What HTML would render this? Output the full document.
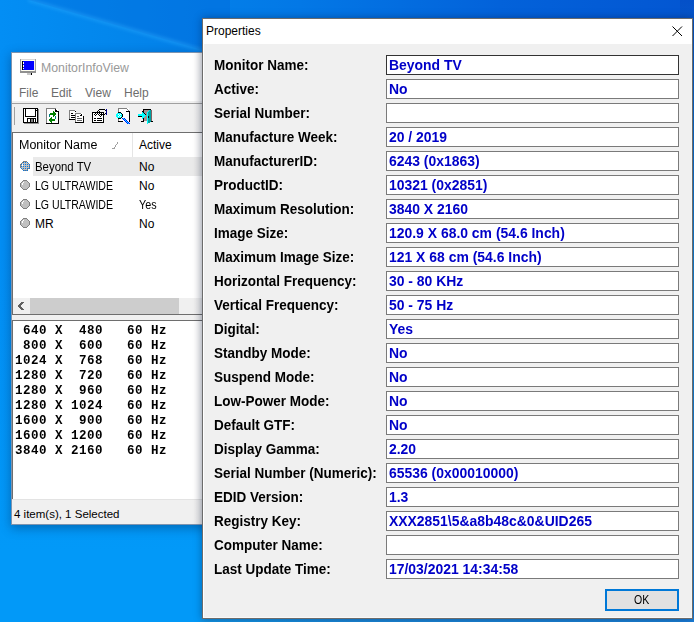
<!DOCTYPE html>
<html><head><meta charset="utf-8"><style>
*{margin:0;padding:0;box-sizing:border-box}
html,body{width:694px;height:622px;overflow:hidden}
body{position:relative;font-family:"Liberation Sans",sans-serif;background:#0a7ee0}
.a{position:absolute}
.t{white-space:pre;line-height:1}
.menu{font-size:12px;color:#6d6d6d}
.hdr{font-size:12px;color:#000}
.lst{font-size:12px;color:#000}
.mono{font-family:"Liberation Mono",monospace;font-weight:bold;font-size:12.5px;letter-spacing:0.5px;color:#000;transform-origin:0 0;transform:scaleY(1.08)}
.lbl{font-size:14px;font-weight:bold;color:#000;transform-origin:0 0;transform:scaleX(0.964)}
.box{left:386px;width:293px;height:20px;background:#fff;border:1px solid #7a7a7a}
.foc{border-color:#333}
.val{font-size:14px;font-weight:bold;color:#0000c8;transform-origin:0 0;transform:scaleX(0.995)}
.ok{font-size:12px;color:#000}
</style></head><body>
<div class="a" style="left:0;top:0;width:694px;height:622px;background:linear-gradient(90deg,#038ef4 0px,#0386ec 120px,#0378e6 300px,#0362da 500px,#0356d2 694px)"></div>
<div class="a" style="left:0;top:250px;width:220px;height:372px;background:linear-gradient(180deg,rgba(2,153,248,0) 0px,rgba(2,153,248,1) 300px)"></div>
<div class="a" style="left:0;top:0;width:230px;height:60px;background:rgba(3,100,215,.35);clip-path:polygon(29px 0,230px 58px,230px 0)"></div>
<div class="a" style="left:29px;top:-2px;width:210px;height:4px;background:rgba(50,175,255,.35);filter:blur(1.5px);transform-origin:0 0;transform:rotate(16.1deg)"></div>
<div class="a" style="left:200px;top:590px;width:494px;height:32px;background:linear-gradient(90deg,#1296e6 0px,#1a88d8 150px,#1a80d4 494px)"></div>
<div class="a" style="left:680px;top:0;width:14px;height:622px;background:linear-gradient(180deg,#0450c8 0px,#0a6ad0 100px,#1a8ad8 290px,#1a7ed8 622px)"></div>
<!-- main window -->
<div class="a" style="left:11px;top:52px;width:200px;height:473px;background:#fff;border:1px solid rgba(20,60,110,.55);box-shadow:0 3px 10px rgba(0,20,60,.35)"></div>
<div class="a" style="left:12px;top:53px;width:190px;height:48px;background:#fff"></div>
<div class="a" style="left:12px;top:101px;width:190px;height:2px;background:#f0f0f0"></div>
<div class="a" style="left:12px;top:103px;width:190px;height:1px;background:#a0a0a0"></div>
<div class="a" style="left:12px;top:104px;width:190px;height:28px;background:#f0f0f0"></div>
<div class="a t" style="left:41px;top:62px;font-size:12.3px;color:#999">MonitorInfoView</div>
<div class="a t menu" style="left:19px;top:87px">File</div>
<div class="a t menu" style="left:51px;top:87px">Edit</div>
<div class="a t menu" style="left:85px;top:87px">View</div>
<div class="a t menu" style="left:124px;top:87px">Help</div>
<!-- list pane -->
<div class="a" style="left:12px;top:132px;width:190px;height:183px;background:#fff;border-top:1px solid #6e6e6e;border-left:1px solid #6e6e6e;border-bottom:1px solid #6e6e6e"></div>
<div class="a t hdr" style="left:19px;top:139px;transform-origin:0 0;transform:scaleX(1.04)">Monitor Name</div>
<div class="a t hdr" style="left:139px;top:139px">Active</div>
<div class="a" style="left:132px;top:133px;width:1px;height:24px;background:#e5e5e5"></div>
<div class="a" style="left:33px;top:157px;width:169px;height:19px;background:#eaeaea"></div>
<div class="a t lst" style="left:35px;top:161px;transform-origin:0 0;transform:scaleX(0.95)">Beyond TV</div>
<div class="a t lst" style="left:139px;top:161px">No</div>
<div class="a t lst" style="left:35px;top:180px;transform-origin:0 0;transform:scaleX(0.88)">LG ULTRAWIDE</div>
<div class="a t lst" style="left:139px;top:180px">No</div>
<div class="a t lst" style="left:35px;top:199px;transform-origin:0 0;transform:scaleX(0.88)">LG ULTRAWIDE</div>
<div class="a t lst" style="left:139px;top:199px;transform-origin:0 0;transform:scaleX(0.9)">Yes</div>
<div class="a t lst" style="left:35px;top:218px">MR</div>
<div class="a t lst" style="left:139px;top:218px">No</div>
<!-- scrollbar -->
<div class="a" style="left:13px;top:298px;width:189px;height:16px;background:#f0f0f0"></div>
<div class="a" style="left:30px;top:298px;width:149px;height:16px;background:#cdcdcd"></div>
<!-- splitter + lower pane -->
<div class="a" style="left:12px;top:315px;width:190px;height:5px;background:#f0f0f0"></div>
<div class="a" style="left:12px;top:320px;width:190px;height:180px;background:#fff;border-top:1px solid #6e6e6e;border-left:1px solid #6e6e6e"></div>
<div class="a" style="left:12px;top:499px;width:190px;height:25px;background:#f0f0f0;border-top:1px solid #e3e3e3"></div>
<div class="a t" style="left:14px;top:509px;font-size:11.5px">4 item(s), 1 Selected</div>
<div class="a" style="left:193px;top:53px;width:9px;height:471px;background:linear-gradient(90deg,rgba(0,0,0,0),rgba(0,0,0,.07))"></div>

<div class="a t mono" style="left:15px;top:324px"> 640 X  480   60 Hz</div>
<div class="a t mono" style="left:15px;top:339px"> 800 X  600   60 Hz</div>
<div class="a t mono" style="left:15px;top:354px">1024 X  768   60 Hz</div>
<div class="a t mono" style="left:15px;top:369px">1280 X  720   60 Hz</div>
<div class="a t mono" style="left:15px;top:384px">1280 X  960   60 Hz</div>
<div class="a t mono" style="left:15px;top:399px">1280 X 1024   60 Hz</div>
<div class="a t mono" style="left:15px;top:414px">1600 X  900   60 Hz</div>
<div class="a t mono" style="left:15px;top:429px">1600 X 1200   60 Hz</div>
<div class="a t mono" style="left:15px;top:444px">3840 X 2160   60 Hz</div>
<svg class="a" style="left:18px;top:57px" width="20" height="20" shape-rendering="crispEdges"><rect x="2" y="2" width="16" height="14" fill="#a0a0a0"/><rect x="3" y="3" width="14" height="11" fill="#f0f0f0"/><rect x="3" y="2" width="14" height="1" fill="#d8d8d8"/><rect x="3" y="3" width="14" height="1" fill="#fffff0"/><rect x="4" y="4" width="12" height="9" fill="#0000ff"/><rect x="4" y="4" width="1" height="9" fill="#000"/><rect x="5" y="5" width="1" height="2" fill="#fff"/><rect x="5" y="8" width="1" height="2" fill="#fff"/><rect x="5" y="11" width="1" height="1" fill="#fff"/><rect x="4" y="13" width="12" height="1" fill="#fffff0"/><rect x="2" y="14" width="16" height="2" fill="#909090"/><rect x="9" y="16" width="4" height="2" fill="#c8c8c8"/><rect x="13" y="16" width="1" height="2" fill="#000"/></svg>
<svg class="a" style="left:21px;top:105px" width="20" height="20" shape-rendering="crispEdges"><rect x="3" y="18" width="15" height="1" fill="#909090"/><rect x="17" y="4" width="1" height="15" fill="#909090"/><rect x="2" y="3" width="15" height="15" fill="#000"/><rect x="3" y="4" width="13" height="13" fill="#fff"/><rect x="4" y="3" width="11" height="9" fill="#000"/><rect x="5" y="4" width="9" height="7" fill="#fff"/><rect x="15" y="4" width="1" height="1" fill="#fff"/><rect x="15" y="5" width="1" height="1" fill="#000"/><rect x="6" y="13" width="9" height="5" fill="#000"/><rect x="7" y="14" width="2" height="3" fill="#fff"/><rect x="10" y="14" width="2" height="3" fill="#808080"/><rect x="13" y="14" width="1" height="3" fill="#fff"/></svg>
<svg class="a" style="left:44px;top:105px" width="20" height="20" shape-rendering="crispEdges"><rect x="2" y="3" width="1" height="16" fill="#808080"/><rect x="2" y="3" width="10" height="1" fill="#808080"/><rect x="3" y="4" width="11" height="14" fill="#fff"/><rect x="12" y="4" width="1" height="2" fill="#fff"/><rect x="11" y="4" width="1" height="1" fill="#000"/><rect x="12" y="5" width="1" height="1" fill="#000"/><rect x="13" y="6" width="1" height="1" fill="#000"/><rect x="11" y="6" width="3" height="1" fill="#000"/><rect x="11" y="5" width="1" height="1" fill="#000"/><rect x="14" y="6" width="1" height="13" fill="#000"/><rect x="2" y="18" width="13" height="1" fill="#000"/><rect x="6" y="8" width="3" height="2" fill="#008000"/><rect x="9" y="6" width="1" height="6" fill="#008000"/><rect x="10" y="7" width="1" height="4" fill="#008000"/><rect x="11" y="8" width="1" height="2" fill="#008000"/><rect x="5" y="9" width="1" height="3" fill="#008080"/><rect x="8" y="14" width="3" height="2" fill="#008000"/><rect x="7" y="12" width="1" height="6" fill="#008000"/><rect x="6" y="13" width="1" height="4" fill="#008000"/><rect x="5" y="14" width="1" height="2" fill="#008000"/><rect x="11" y="11" width="1" height="3" fill="#008080"/></svg>
<svg class="a" style="left:67px;top:105px" width="20" height="20" shape-rendering="crispEdges"><rect x="2" y="5" width="7" height="9" fill="#fff"/><rect x="2" y="5" width="1" height="10" fill="#808080"/><rect x="2" y="5" width="6" height="1" fill="#808080"/><rect x="2" y="14" width="7" height="1" fill="#000"/><rect x="8" y="6" width="1" height="1" fill="#000"/><rect x="4" y="8" width="2" height="1" fill="#000"/><rect x="4" y="10" width="4" height="1" fill="#000"/><rect x="4" y="12" width="4" height="1" fill="#000"/><rect x="9" y="8" width="7" height="9" fill="#fff"/><rect x="8" y="8" width="1" height="10" fill="#808080"/><rect x="8" y="8" width="6" height="1" fill="#808080"/><rect x="14" y="9" width="1" height="2" fill="#000"/><rect x="13" y="10" width="2" height="1" fill="#000"/><rect x="16" y="11" width="1" height="7" fill="#000"/><rect x="8" y="17" width="9" height="1" fill="#000"/><rect x="10" y="11" width="2" height="1" fill="#606060"/><rect x="10" y="13" width="5" height="1" fill="#606060"/><rect x="10" y="15" width="5" height="1" fill="#606060"/></svg>
<svg class="a" style="left:90px;top:105px" width="20" height="20" shape-rendering="crispEdges"><rect x="2" y="7" width="12" height="11" fill="#000"/><rect x="3" y="8" width="10" height="9" fill="#fff"/><rect x="9" y="4" width="6" height="1" fill="#000"/><rect x="15" y="5" width="1" height="1" fill="#000"/><rect x="15" y="8" width="1" height="1" fill="#000"/><rect x="10" y="9" width="5" height="1" fill="#000"/><rect x="16" y="4" width="1" height="6" fill="#000090"/><rect x="8" y="5" width="1" height="1" fill="#000"/><rect x="7" y="6" width="1" height="1" fill="#000"/><rect x="9" y="6" width="1" height="1" fill="#000"/><rect x="6" y="7" width="1" height="1" fill="#000"/><rect x="8" y="7" width="1" height="1" fill="#000"/><rect x="10" y="7" width="1" height="1" fill="#000"/><rect x="5" y="8" width="1" height="1" fill="#000"/><rect x="7" y="8" width="1" height="1" fill="#000"/><rect x="9" y="8" width="1" height="1" fill="#000"/><rect x="11" y="8" width="1" height="1" fill="#000"/><rect x="4" y="9" width="1" height="1" fill="#000"/><rect x="6" y="9" width="1" height="1" fill="#000"/><rect x="8" y="9" width="1" height="1" fill="#000"/><rect x="10" y="9" width="1" height="1" fill="#000"/><rect x="5" y="10" width="1" height="1" fill="#000"/><rect x="9" y="10" width="1" height="1" fill="#000"/><rect x="11" y="10" width="1" height="1" fill="#000"/><rect x="10" y="11" width="1" height="1" fill="#000"/><rect x="4" y="13" width="2" height="1" fill="#000"/><rect x="7" y="13" width="5" height="1" fill="#000"/><rect x="4" y="15" width="2" height="1" fill="#000"/><rect x="7" y="15" width="5" height="1" fill="#000"/></svg>
<svg class="a" style="left:113px;top:105px" width="20" height="20" shape-rendering="crispEdges"><rect x="5" y="3" width="11" height="14" fill="#fff"/><rect x="5" y="3" width="9" height="1" fill="#808080"/><rect x="5" y="3" width="1" height="14" fill="#808080"/><rect x="14" y="4" width="1" height="1" fill="#808080"/><rect x="15" y="5" width="1" height="1" fill="#808080"/><rect x="13" y="6" width="4" height="1" fill="#000"/><rect x="16" y="6" width="1" height="11" fill="#000"/><rect x="5" y="16" width="5" height="1" fill="#000"/><rect x="5" y="7" width="3" height="1" fill="#000"/><rect x="8" y="8" width="1" height="1" fill="#000"/><rect x="9" y="9" width="1" height="3" fill="#000"/><rect x="8" y="12" width="1" height="1" fill="#000"/><rect x="5" y="13" width="3" height="1" fill="#000"/><rect x="4" y="8" width="4" height="5" fill="#00ffff"/><rect x="3" y="9" width="6" height="3" fill="#00ffff"/><rect x="5" y="9" width="1" height="1" fill="#fff"/><rect x="7" y="9" width="1" height="1" fill="#fff"/><rect x="6" y="10" width="1" height="1" fill="#fff"/><rect x="5" y="11" width="1" height="1" fill="#fff"/><rect x="7" y="11" width="1" height="1" fill="#fff"/><rect x="9" y="13" width="3" height="1" fill="#0000ff"/><rect x="10" y="13" width="1" height="1" fill="#00ffff"/><rect x="10" y="14" width="3" height="1" fill="#0000ff"/><rect x="11" y="14" width="1" height="1" fill="#00ffff"/><rect x="11" y="15" width="3" height="1" fill="#0000ff"/><rect x="12" y="15" width="1" height="1" fill="#00ffff"/><rect x="12" y="16" width="3" height="1" fill="#0000ff"/><rect x="13" y="16" width="1" height="1" fill="#00ffff"/><rect x="13" y="17" width="3" height="1" fill="#0000ff"/><rect x="14" y="17" width="1" height="1" fill="#00ffff"/><rect x="14" y="18" width="3" height="1" fill="#0000ff"/><rect x="15" y="18" width="1" height="1" fill="#00ffff"/></svg>
<svg class="a" style="left:136px;top:105px" width="20" height="20" shape-rendering="crispEdges"><rect x="7" y="4" width="8" height="1" fill="#000"/><rect x="8" y="5" width="7" height="11" fill="#a09090"/><rect x="15" y="5" width="1" height="11" fill="#806060"/><rect x="7" y="5" width="1" height="2" fill="#000"/><rect x="7" y="13" width="1" height="4" fill="#000"/><rect x="5" y="16" width="3" height="1" fill="#000"/><rect x="15" y="16" width="2" height="1" fill="#000"/><polygon points="11,7 15,5 15,17 11,19" fill="#00a0a0"/><rect x="11" y="7" width="1" height="12" fill="#00ffff"/><rect x="12" y="6" width="1" height="1" fill="#00ffff"/><rect x="13" y="5" width="1" height="1" fill="#00e0e0"/><rect x="12" y="11" width="1" height="2" fill="#000"/><rect x="2" y="9" width="5" height="2" fill="#00ffff"/><rect x="2" y="11" width="5" height="1" fill="#000"/><rect x="6" y="7" width="1" height="7" fill="#00ffff"/><rect x="7" y="8" width="1" height="5" fill="#00ffff"/><rect x="8" y="9" width="1" height="3" fill="#00ffff"/><rect x="9" y="10" width="1" height="1" fill="#00ffff"/><rect x="6" y="6" width="1" height="1" fill="#000"/><rect x="7" y="7" width="1" height="1" fill="#000"/><rect x="8" y="8" width="1" height="1" fill="#000"/><rect x="9" y="9" width="1" height="1" fill="#000"/></svg>
<div class="a" style="left:14px;top:107px;width:1px;height:18px;background:#a0a0a0"></div>
<svg class="a" style="left:20px;top:161px" width="10" height="10" shape-rendering="crispEdges"><rect x="3" y="1" width="4" height="8" fill="#c0c0c0"/><rect x="2" y="2" width="6" height="6" fill="#c0c0c0"/><rect x="1" y="3" width="8" height="4" fill="#c0c0c0"/><rect x="3" y="0" width="4" height="1" fill="#808080"/><rect x="3" y="9" width="4" height="1" fill="#808080"/><rect x="0" y="3" width="1" height="4" fill="#808080"/><rect x="9" y="3" width="1" height="4" fill="#808080"/><rect x="2" y="1" width="1" height="1" fill="#808080"/><rect x="1" y="2" width="1" height="1" fill="#808080"/><rect x="7" y="1" width="1" height="1" fill="#808080"/><rect x="8" y="2" width="1" height="1" fill="#808080"/><rect x="1" y="7" width="1" height="1" fill="#808080"/><rect x="2" y="8" width="1" height="1" fill="#808080"/><rect x="8" y="7" width="1" height="1" fill="#808080"/><rect x="7" y="8" width="1" height="1" fill="#808080"/><rect x="3" y="1" width="1" height="1" fill="#0a78e0"/><rect x="5" y="1" width="1" height="1" fill="#0a78e0"/><rect x="7" y="1" width="1" height="1" fill="#0a78e0"/><rect x="1" y="3" width="1" height="1" fill="#0a78e0"/><rect x="3" y="3" width="1" height="1" fill="#0a78e0"/><rect x="5" y="3" width="1" height="1" fill="#0a78e0"/><rect x="7" y="3" width="1" height="1" fill="#0a78e0"/><rect x="9" y="3" width="1" height="1" fill="#0a78e0"/><rect x="1" y="5" width="1" height="1" fill="#0a78e0"/><rect x="3" y="5" width="1" height="1" fill="#0a78e0"/><rect x="5" y="5" width="1" height="1" fill="#0a78e0"/><rect x="7" y="5" width="1" height="1" fill="#0a78e0"/><rect x="9" y="5" width="1" height="1" fill="#0a78e0"/><rect x="1" y="7" width="1" height="1" fill="#0a78e0"/><rect x="3" y="7" width="1" height="1" fill="#0a78e0"/><rect x="5" y="7" width="1" height="1" fill="#0a78e0"/><rect x="7" y="7" width="1" height="1" fill="#0a78e0"/><rect x="9" y="7" width="1" height="1" fill="#0a78e0"/><rect x="3" y="9" width="1" height="1" fill="#0a78e0"/><rect x="5" y="9" width="1" height="1" fill="#0a78e0"/><rect x="7" y="9" width="1" height="1" fill="#0a78e0"/><rect x="2" y="3" width="1" height="2" fill="#fff"/></svg>
<svg class="a" style="left:20px;top:180px" width="10" height="10" shape-rendering="crispEdges"><rect x="3" y="1" width="4" height="8" fill="#c0c0c0"/><rect x="2" y="2" width="6" height="6" fill="#c0c0c0"/><rect x="1" y="3" width="8" height="4" fill="#c0c0c0"/><rect x="3" y="0" width="4" height="1" fill="#808080"/><rect x="3" y="9" width="4" height="1" fill="#808080"/><rect x="0" y="3" width="1" height="4" fill="#808080"/><rect x="9" y="3" width="1" height="4" fill="#808080"/><rect x="2" y="1" width="1" height="1" fill="#808080"/><rect x="1" y="2" width="1" height="1" fill="#808080"/><rect x="7" y="1" width="1" height="1" fill="#808080"/><rect x="8" y="2" width="1" height="1" fill="#808080"/><rect x="1" y="7" width="1" height="1" fill="#808080"/><rect x="2" y="8" width="1" height="1" fill="#808080"/><rect x="8" y="7" width="1" height="1" fill="#808080"/><rect x="7" y="8" width="1" height="1" fill="#808080"/><rect x="2" y="3" width="1" height="2" fill="#fff"/><rect x="3" y="2" width="1" height="1" fill="#fff"/></svg>
<svg class="a" style="left:20px;top:199px" width="10" height="10" shape-rendering="crispEdges"><rect x="3" y="1" width="4" height="8" fill="#c0c0c0"/><rect x="2" y="2" width="6" height="6" fill="#c0c0c0"/><rect x="1" y="3" width="8" height="4" fill="#c0c0c0"/><rect x="3" y="0" width="4" height="1" fill="#808080"/><rect x="3" y="9" width="4" height="1" fill="#808080"/><rect x="0" y="3" width="1" height="4" fill="#808080"/><rect x="9" y="3" width="1" height="4" fill="#808080"/><rect x="2" y="1" width="1" height="1" fill="#808080"/><rect x="1" y="2" width="1" height="1" fill="#808080"/><rect x="7" y="1" width="1" height="1" fill="#808080"/><rect x="8" y="2" width="1" height="1" fill="#808080"/><rect x="1" y="7" width="1" height="1" fill="#808080"/><rect x="2" y="8" width="1" height="1" fill="#808080"/><rect x="8" y="7" width="1" height="1" fill="#808080"/><rect x="7" y="8" width="1" height="1" fill="#808080"/><rect x="2" y="3" width="1" height="2" fill="#fff"/><rect x="3" y="2" width="1" height="1" fill="#fff"/></svg>
<svg class="a" style="left:20px;top:218px" width="10" height="10" shape-rendering="crispEdges"><rect x="3" y="1" width="4" height="8" fill="#c0c0c0"/><rect x="2" y="2" width="6" height="6" fill="#c0c0c0"/><rect x="1" y="3" width="8" height="4" fill="#c0c0c0"/><rect x="3" y="0" width="4" height="1" fill="#808080"/><rect x="3" y="9" width="4" height="1" fill="#808080"/><rect x="0" y="3" width="1" height="4" fill="#808080"/><rect x="9" y="3" width="1" height="4" fill="#808080"/><rect x="2" y="1" width="1" height="1" fill="#808080"/><rect x="1" y="2" width="1" height="1" fill="#808080"/><rect x="7" y="1" width="1" height="1" fill="#808080"/><rect x="8" y="2" width="1" height="1" fill="#808080"/><rect x="1" y="7" width="1" height="1" fill="#808080"/><rect x="2" y="8" width="1" height="1" fill="#808080"/><rect x="8" y="7" width="1" height="1" fill="#808080"/><rect x="7" y="8" width="1" height="1" fill="#808080"/><rect x="2" y="3" width="1" height="2" fill="#fff"/><rect x="3" y="2" width="1" height="1" fill="#fff"/></svg>
<svg class="a" style="left:112px;top:142px" width="6" height="7" shape-rendering="crispEdges"><rect x="0" y="6" width="3" height="1" fill="#a0a0a0"/><rect x="2" y="5" width="1" height="1" fill="#a0a0a0"/><rect x="3" y="3" width="1" height="2" fill="#a0a0a0"/><rect x="4" y="2" width="1" height="1" fill="#a0a0a0"/><rect x="5" y="0" width="1" height="2" fill="#a0a0a0"/></svg>
<svg class="a" style="left:16px;top:302px" width="8" height="8" shape-rendering="crispEdges"><rect x="5" y="0" width="3" height="1" fill="#606060"/><rect x="4" y="1" width="3" height="1" fill="#606060"/><rect x="3" y="2" width="3" height="1" fill="#606060"/><rect x="2" y="3" width="3" height="1" fill="#606060"/><rect x="2" y="4" width="3" height="1" fill="#606060"/><rect x="3" y="5" width="3" height="1" fill="#606060"/><rect x="4" y="6" width="3" height="1" fill="#606060"/><rect x="5" y="7" width="3" height="1" fill="#606060"/></svg>
<!-- dialog -->
<div class="a" style="left:202px;top:18px;width:491px;height:601px;background:#f0f0f0;border:1px solid rgba(0,0,0,.55);box-shadow:0 0 8px rgba(0,20,60,.4)"></div>
<div class="a" style="left:203px;top:19px;width:489px;height:599px;border-left:1px solid #fff;border-bottom:1px solid #f8f8f8;border-right:1px solid #f4f4f4"></div>
<div class="a" style="left:203px;top:19px;width:489px;height:25px;background:#fff"></div>
<div class="a t" style="left:206px;top:25px;font-size:12px">Properties</div>

<div class="a t lbl" style="left:214px;top:58px">Monitor Name:</div>
<div class="a box foc" style="top:55px"></div>
<div class="a t val" style="left:389px;top:58px">Beyond TV</div>
<div class="a t lbl" style="left:214px;top:82px">Active:</div>
<div class="a box" style="top:79px"></div>
<div class="a t val" style="left:389px;top:82px">No</div>
<div class="a t lbl" style="left:214px;top:106px">Serial Number:</div>
<div class="a box" style="top:103px"></div>
<div class="a t lbl" style="left:214px;top:130px">Manufacture Week:</div>
<div class="a box" style="top:127px"></div>
<div class="a t val" style="left:389px;top:130px">20 / 2019</div>
<div class="a t lbl" style="left:214px;top:154px">ManufacturerID:</div>
<div class="a box" style="top:151px"></div>
<div class="a t val" style="left:389px;top:154px">6243 (0x1863)</div>
<div class="a t lbl" style="left:214px;top:178px">ProductID:</div>
<div class="a box" style="top:175px"></div>
<div class="a t val" style="left:389px;top:178px">10321 (0x2851)</div>
<div class="a t lbl" style="left:214px;top:202px">Maximum Resolution:</div>
<div class="a box" style="top:199px"></div>
<div class="a t val" style="left:389px;top:202px">3840 X 2160</div>
<div class="a t lbl" style="left:214px;top:226px">Image Size:</div>
<div class="a box" style="top:223px"></div>
<div class="a t val" style="left:389px;top:226px">120.9 X 68.0 cm (54.6 Inch)</div>
<div class="a t lbl" style="left:214px;top:250px">Maximum Image Size:</div>
<div class="a box" style="top:247px"></div>
<div class="a t val" style="left:389px;top:250px">121 X 68 cm (54.6 Inch)</div>
<div class="a t lbl" style="left:214px;top:274px">Horizontal Frequency:</div>
<div class="a box" style="top:271px"></div>
<div class="a t val" style="left:389px;top:274px">30 - 80 KHz</div>
<div class="a t lbl" style="left:214px;top:298px">Vertical Frequency:</div>
<div class="a box" style="top:295px"></div>
<div class="a t val" style="left:389px;top:298px">50 - 75 Hz</div>
<div class="a t lbl" style="left:214px;top:322px">Digital:</div>
<div class="a box" style="top:319px"></div>
<div class="a t val" style="left:389px;top:322px">Yes</div>
<div class="a t lbl" style="left:214px;top:346px">Standby Mode:</div>
<div class="a box" style="top:343px"></div>
<div class="a t val" style="left:389px;top:346px">No</div>
<div class="a t lbl" style="left:214px;top:370px">Suspend Mode:</div>
<div class="a box" style="top:367px"></div>
<div class="a t val" style="left:389px;top:370px">No</div>
<div class="a t lbl" style="left:214px;top:394px">Low-Power Mode:</div>
<div class="a box" style="top:391px"></div>
<div class="a t val" style="left:389px;top:394px">No</div>
<div class="a t lbl" style="left:214px;top:418px">Default GTF:</div>
<div class="a box" style="top:415px"></div>
<div class="a t val" style="left:389px;top:418px">No</div>
<div class="a t lbl" style="left:214px;top:442px">Display Gamma:</div>
<div class="a box" style="top:439px"></div>
<div class="a t val" style="left:389px;top:442px">2.20</div>
<div class="a t lbl" style="left:214px;top:466px">Serial Number (Numeric):</div>
<div class="a box" style="top:463px"></div>
<div class="a t val" style="left:389px;top:466px">65536 (0x00010000)</div>
<div class="a t lbl" style="left:214px;top:490px">EDID Version:</div>
<div class="a box" style="top:487px"></div>
<div class="a t val" style="left:389px;top:490px">1.3</div>
<div class="a t lbl" style="left:214px;top:514px">Registry Key:</div>
<div class="a box" style="top:511px"></div>
<div class="a t val" style="left:389px;top:514px">XXX2851\5&amp;a8b48c&amp;0&amp;UID265</div>
<div class="a t lbl" style="left:214px;top:538px">Computer Name:</div>
<div class="a box" style="top:535px"></div>
<div class="a t lbl" style="left:214px;top:562px">Last Update Time:</div>
<div class="a box" style="top:559px"></div>
<div class="a t val" style="left:389px;top:562px">17/03/2021 14:34:58</div>
<div class="a" style="left:605px;top:589px;width:74px;height:22px;background:#e1e1e1;border:2px solid #0078d7"></div>
<div class="a t ok" style="left:634px;top:594px;transform-origin:0 0;transform:scaleX(0.88)">OK</div>
<svg class="a" style="left:672px;top:26px" width="11" height="11"><path d="M0.5 0.5L10 10M10 0.5L0.5 10" stroke="#000" stroke-width="1"/></svg>
</body></html>
